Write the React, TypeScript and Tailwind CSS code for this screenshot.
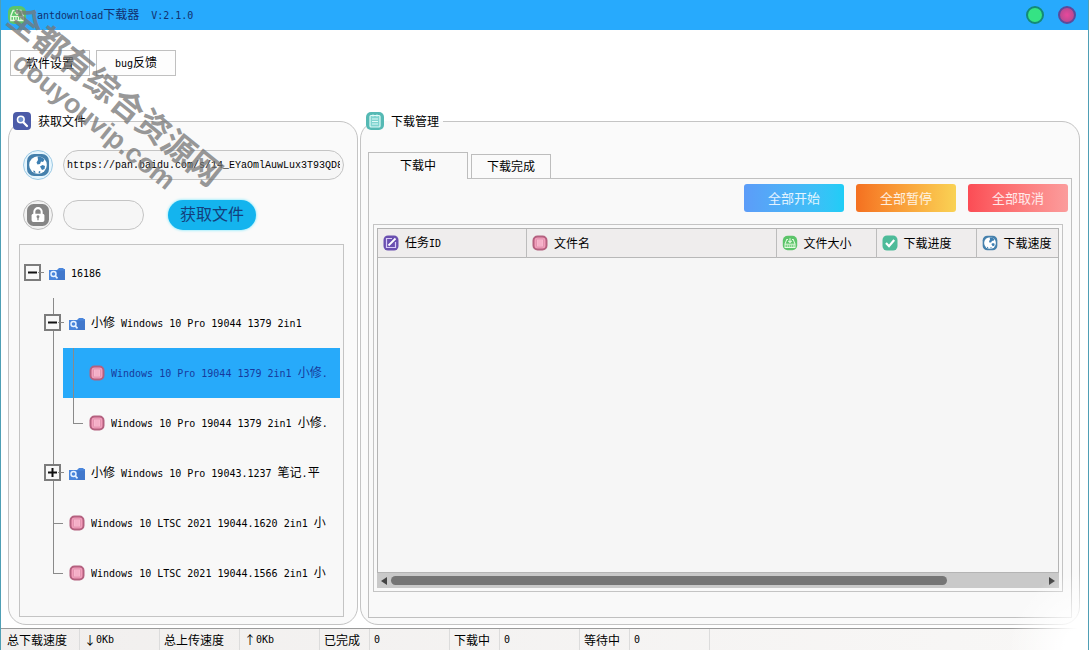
import { useState } from 'react'
import type { ReactNode } from 'react'

type IconProps = { className?: string }

const FONT_MONO = "font-['DejaVu_Sans_Mono','Noto_Sans_CJK_SC',monospace]"

// Latin runs are set smaller than the CJK ones so that two of them fill one CJK cell
function Mixed({ children }: { children: string }) {
  const parts = children.split(/([\x20-\x7e]+)/).filter(Boolean)
  return (
    <>
      {parts.map((p, i) =>
        /^[\x20-\x7e]/.test(p) ? (
          <span key={i} className={`whitespace-pre text-[10px] ${FONT_MONO}`}>
            {p}
          </span>
        ) : (
          <span key={i}>{p}</span>
        ),
      )}
    </>
  )
}

function BoxIcon({ className = 'size-4' }: IconProps) {
  return (
    <svg viewBox="0 0 16 16" className={className} aria-hidden="true">
      <rect x="1.5" y="1.5" width="13" height="13" rx="4" fill="#f29dbb" stroke="#b4607f" strokeWidth="2" />
      <rect x="4.5" y="4" width="7" height="8" rx="1" fill="#f8b6cd" stroke="#dc8eaa" strokeWidth=".8" />
      <path d="M7 4.5v7M9 4.5v7" stroke="#eda3bc" strokeWidth=".6" />
    </svg>
  )
}

function FolderIcon({ className = 'size-4' }: IconProps) {
  return (
    <svg viewBox="0 0 16 16" className={className} aria-hidden="true">
      <path d="M0 5h8l2-2h4l1 1h1v11H0z" fill="#4a86dc" />
      <path d="M8 5.5h8V15H8z" fill="#4178cc" />
      <circle cx="4.5" cy="9" r="2.5" fill="#4a86dc" stroke="#e8f3ff" strokeWidth="1.4" />
      <path d="M6.3 11l2.2 2.4" stroke="#e8f3ff" strokeWidth="1.6" />
    </svg>
  )
}

function DriveIcon({ className = 'size-4' }: IconProps) {
  return (
    <svg viewBox="0 0 20 20" className={className} aria-hidden="true">
      <rect x="1" y="1" width="18" height="18" rx="6" fill="#5cc46a" />
      <path d="M7.5 5.5H6L3.8 11v4.5h12.4V11L14 5.5h-1.5" fill="none" stroke="#e4fbe0" strokeWidth="1.3" />
      <path d="M10 4v5M7.8 7.2L10 9.4l2.2-2.2" fill="none" stroke="#e4fbe0" strokeWidth="1.3" />
      <path d="M3.8 11.5h12.4" stroke="#e4fbe0" strokeWidth="1.2" />
      <path d="M6.5 12v3M9 12v3M11.5 12v3M14 12v3" stroke="#e4fbe0" strokeWidth="1.1" />
    </svg>
  )
}

function SearchIcon({ className = 'size-4' }: IconProps) {
  return (
    <svg viewBox="0 0 18 18" className={className} aria-hidden="true">
      <rect width="18" height="18" rx="4" fill="#4b5ba8" />
      <circle cx="7.8" cy="7.5" r="3.3" fill="#6f8fd0" stroke="#fff" strokeWidth="1.6" />
      <path d="M10.3 10.2l3.7 3.8" stroke="#fff" strokeWidth="2.2" strokeLinecap="round" />
    </svg>
  )
}

function ListIcon({ className = 'size-4' }: IconProps) {
  return (
    <svg viewBox="0 0 18 18" className={className} aria-hidden="true">
      <rect width="18" height="18" rx="5" fill="#55b9b4" />
      <rect x="4" y="3.5" width="10" height="11.5" rx="1" fill="#7fd3cf" stroke="#dffaf7" strokeWidth="1.2" />
      <path d="M6 7h6M6 9.5h6M6 12h6M7 2.5v2M11 2.5v2" stroke="#dffaf7" strokeWidth="1.1" />
    </svg>
  )
}

function GlobeIcon({ className = 'size-4' }: IconProps) {
  return (
    <svg viewBox="0 0 24 24" className={className} aria-hidden="true">
      <rect x="1" y="1" width="22" height="22" rx="7" fill="#4580ac" />
      <circle cx="12" cy="12" r="8.8" fill="#fff" />
      <path d="M11.5 3.2c3 0 5.500 1.300 7 3.300l-1.500 2.500-2-.5-1 2.500-2.500.5-1-2 1.500-2.500z" fill="#3d7fb2" />
      <path d="M14 13.5l2.5-1.500 2.500 1-.5 3-2.500 1zM13 18l1.500.5-.5 1.500-1.500-.3zM7 17.500l2 .5.5 2-1.500-.5z" fill="#3d7fb2" />
    </svg>
  )
}

function LockIcon({ className = 'size-4' }: IconProps) {
  return (
    <svg viewBox="0 0 24 24" className={className} aria-hidden="true">
      <rect width="24" height="24" rx="7" fill="#858585" />
      <path d="M8 11V8.5a4 4 0 018 0V11" fill="none" stroke="#fff" strokeWidth="2.2" />
      <rect x="5" y="10.5" width="14" height="9" rx="2" fill="#fff" />
      <circle cx="12" cy="14" r="1.6" fill="#858585" />
      <path d="M12 14.5v3.2" stroke="#858585" strokeWidth="1.4" />
    </svg>
  )
}

function EditIcon({ className = 'size-4' }: IconProps) {
  return (
    <svg viewBox="0 0 16 16" className={className} aria-hidden="true">
      <rect x=".5" y=".5" width="15" height="15" rx="4.5" fill="#6a4fb0" />
      <path d="M9 3.5H3.5v9h9V7" fill="none" stroke="#d9ccf8" strokeWidth="1.2" />
      <path d="M5.5 10.5l7-7" stroke="#fff" strokeWidth="1.8" />
    </svg>
  )
}

function CheckIcon({ className = 'size-4' }: IconProps) {
  return (
    <svg viewBox="0 0 16 16" className={className} aria-hidden="true">
      <rect x=".5" y=".5" width="15" height="15" rx="4.5" fill="#4dbb99" />
      <path d="M4 8l3 3.2L12.2 5" fill="none" stroke="#fff" strokeWidth="2.2" />
    </svg>
  )
}

type GroupBoxProps = { icon: ReactNode; title: string; className: string; legendClass: string; children: ReactNode }

function GroupBox({ icon, title, className, legendClass, children }: GroupBoxProps) {
  return (
    <fieldset className={`flex min-w-0 flex-col rounded-[18px] border border-[#c4c4c4] bg-[#fafafa] ${className}`}>
      <legend className={`flex h-[18px] items-center gap-[7px] pr-1 ${legendClass}`}>
        {icon}
        {title}
      </legend>
      {children}
    </fieldset>
  )
}

type TreeItem = { depth: number; label: string; kind: 'folder' | 'file'; state?: 'open' | 'closed' }

const TREE: TreeItem[] = [
  { depth: 0, label: '16186', kind: 'folder', state: 'open' },
  { depth: 1, label: '小修 Windows 10 Pro 19044 1379 2in1', kind: 'folder', state: 'open' },
  { depth: 2, label: 'Windows 10 Pro 19044 1379 2in1 小修.', kind: 'file' },
  { depth: 2, label: 'Windows 10 Pro 19044 1379 2in1 小修.', kind: 'file' },
  { depth: 1, label: '小修 Windows 10 Pro 19043.1237 笔记.平', kind: 'folder', state: 'closed' },
  { depth: 1, label: 'Windows 10 LTSC 2021 19044.1620 2in1 小', kind: 'file' },
  { depth: 1, label: 'Windows 10 LTSC 2021 19044.1566 2in1 小', kind: 'file' },
]

// One 20px guide cell: a vertical line down the middle and an optional branch to the right
function Guide({ line, branch }: { line: 'full' | 'top'; branch: boolean }) {
  return (
    <svg viewBox="0 0 20 50" className="h-[50px] w-5 shrink-0" aria-hidden="true">
      <path d={line === 'full' ? 'M10.5 0v50' : 'M10.5 0v25.5'} stroke="#8a8a8a" />
      {branch && <path d="M10 25.5h10" stroke="#8a8a8a" />}
    </svg>
  )
}

function Toggle({ open, line }: { open: boolean; line: boolean }) {
  return (
    <button type="button" aria-label={open ? '折叠' : '展开'} className="h-[50px] w-5 shrink-0">
      <svg viewBox="0 0 20 50" className="h-[50px] w-5 overflow-visible" aria-hidden="true">
        {line && <path d="M10.5 0v50" stroke="#8a8a8a" />}
        <rect x="2" y="17" width="15" height="15" fill="#f8f8f8" stroke="#7c7c7c" strokeWidth="2" />
        <path d="M15 24.5h6" stroke="#8a8a8a" />
        <path d={open ? 'M5 24.5h9' : 'M5 24.5h9M9.5 20v9'} stroke="#111" strokeWidth="2" />
      </svg>
    </button>
  )
}

type TreeRowProps = { item: TreeItem; index: number; selected: boolean; onSelect: () => void }

function TreeRow({ item, index, selected, onSelect }: TreeRowProps) {
  const lastChild = TREE[index + 1]?.depth !== item.depth
  return (
    <li className="flex h-[50px] items-center">
      {item.depth > 0 && <span className="w-5 shrink-0" />}
      {item.depth > 1 && <Guide line="full" branch={false} />}
      <div className={`flex h-[50px] min-w-0 flex-1 items-center ${selected ? 'bg-[#27aafa] text-[#173a9c]' : ''}`}>
        {item.state ? (
          <Toggle open={item.state === 'open'} line={item.depth > 0} />
        ) : (
          <Guide line={lastChild ? 'top' : 'full'} branch={!selected} />
        )}
        <button type="button" onClick={onSelect} className="flex min-w-0 flex-1 items-center gap-1.5 pl-1.5 text-left">
          {item.kind === 'folder' ? <FolderIcon className="size-4 shrink-0" /> : <BoxIcon className="size-4 shrink-0" />}
          <span className="overflow-hidden whitespace-nowrap">
            <Mixed>{item.label}</Mixed>
          </span>
        </button>
      </div>
    </li>
  )
}

const COLUMNS = [
  { label: '任务ID', icon: <EditIcon />, width: 'w-[22%]' },
  { label: '文件名', icon: <BoxIcon />, width: 'w-[37%]' },
  { label: '文件大小', icon: <DriveIcon />, width: 'w-[100px]' },
  { label: '下载进度', icon: <CheckIcon />, width: 'w-[100px]' },
  { label: '下载速度', icon: <GlobeIcon />, width: 'w-[82px]' },
]

const ACTIONS = [
  { label: '全部开始', color: 'from-[#5c9cf8] to-[#1fcdf6]' },
  { label: '全部暂停', color: 'from-[#f47020] to-[#f9d254]' },
  { label: '全部取消', color: 'from-[#fb4c55] to-[#fb9c9c]' },
]

const STATUS = [
  { text: '总下载速度', width: 'w-[79px] pl-1.5' },
  { text: '↓0Kb', width: 'w-20 pl-1' },
  { text: '总上传速度', width: 'w-20 pl-1' },
  { text: '↑0Kb', width: 'w-20 pl-1' },
  { text: '已完成', width: 'w-[50px] pl-1' },
  { text: '0', width: 'w-20 pl-1' },
  { text: '下载中', width: 'w-[50px] pl-1' },
  { text: '0', width: 'w-20 pl-1' },
  { text: '等待中', width: 'w-[50px] pl-1' },
  { text: '0', width: 'w-20 pl-1' },
]

function TitleBar() {
  return (
    <header className="flex h-[30px] shrink-0 items-center bg-[#27aafd] px-1.5 text-[#12306e]">
      <DriveIcon className="size-5" />
      <h1 className="ml-2.5">
        <Mixed>antdownload下载器</Mixed>
      </h1>
      <span className="ml-3">
        <Mixed>V:2.1.0</Mixed>
      </span>
      <div className="ml-auto flex gap-3.5 pr-1.5">
        <button type="button" aria-label="最小化" className="size-[18px] rounded-full border-2 border-[#148a78] bg-[#35e384]" />
        <button
          type="button"
          aria-label="关闭"
          className="size-[18px] rounded-full border-2 border-[#5b4a9c] bg-radial from-[#e8489c] to-[#a8488c]"
        />
      </div>
    </header>
  )
}

function FetchPanel() {
  const [url, setUrl] = useState('https://pan.baidu.com/s/14_EYaOmlAuwLux3T93QD8')
  const [code, setCode] = useState('')
  const [selected, setSelected] = useState(2)

  return (
    <GroupBox
      icon={<SearchIcon className="size-[18px]" />}
      title="获取文件"
      legendClass="-ml-1.5"
      className="w-[350px] shrink-0 pr-[13px] pb-[7px] pl-2.5"
    >
      <div className="mt-5 flex items-center gap-2.5 pl-1">
        <label
          htmlFor="url"
          aria-label="链接"
          className="grid size-[30px] shrink-0 place-items-center rounded-full border border-[#9cc9e4] bg-[#e6f5fd]"
        >
          <GlobeIcon className="size-6" />
        </label>
        <input
          id="url"
          value={url}
          onChange={(e) => setUrl(e.target.value)}
          className="h-[30px] min-w-0 flex-1 rounded-full border border-[#c4c4c4] bg-[#f6f6f6] px-[3px] font-['Liberation_Mono',monospace] text-[10px]"
        />
      </div>
      <div className="mt-5 flex items-center gap-2.5 pl-1">
        <label
          htmlFor="code"
          aria-label="提取码"
          className="grid size-[30px] shrink-0 place-items-center rounded-full border border-[#bcbcbc] bg-[#f2f2f2]"
        >
          <LockIcon className="size-[22px]" />
        </label>
        <input
          id="code"
          value={code}
          onChange={(e) => setCode(e.target.value)}
          className="h-[30px] w-[81px] rounded-full border border-[#c4c4c4] bg-[#f6f6f6] px-2 font-['Liberation_Mono',monospace] text-[10px]"
        />
        <button
          type="button"
          className="ml-3.5 h-[30px] w-[88px] rounded-full bg-[#14b4ee] pb-1 text-base text-[#14407c] shadow-[0_0_3px_#5fe4ff]"
        >
          获取文件
        </button>
      </div>
      <ul className="mt-3.5 flex-1 border border-[#c4c4c4] bg-[#f8f8f8] px-[3px] pt-[3px]">
        {TREE.map((item, i) => (
          <TreeRow key={i} item={item} index={i} selected={selected === i} onSelect={() => setSelected(i)} />
        ))}
      </ul>
    </GroupBox>
  )
}

function DownloadPanel() {
  const [tab, setTab] = useState(0)

  return (
    <GroupBox
      icon={<ListIcon className="size-[18px]" />}
      title="下载管理"
      legendClass="-ml-0.5"
      className="flex-1 px-[7px] pb-1.5"
    >
      <div role="tablist" className="mt-[22px] flex items-end gap-[3px]">
        {['下载中', '下载完成'].map((label, i) => (
          <button
            key={label}
            type="button"
            role="tab"
            aria-selected={tab === i}
            onClick={() => setTab(i)}
            className={`border border-b-0 border-[#bdbdbd] pb-0.5 ${
              tab === i ? 'z-10 -mb-px h-[27px] w-[100px] bg-[#f9f9f9]' : 'h-6 w-20 bg-[#fafafa]'
            }`}
          >
            {label}
          </button>
        ))}
      </div>
      <div role="tabpanel" className="flex flex-1 flex-col border border-[#c0c0c0] bg-[#f9f9f9] pb-[25px]">
        <div className="flex justify-end gap-3 px-[3px] pt-[5px]">
          {ACTIONS.map((a) => (
            <button
              key={a.label}
              type="button"
              className={`h-7 w-[100px] rounded-[3px] bg-linear-to-r text-[13px] text-white/85 ${a.color}`}
            >
              {a.label}
            </button>
          ))}
        </div>
        <div className="mt-3 mr-2 ml-1 flex flex-1 flex-col border border-[#c4c4c4] p-[3px]">
          <div className="flex-1 border border-[#b4b4b4] bg-[#f6f6f6]">
            <table className="w-full table-fixed border-collapse">
              <thead>
                <tr className="h-7 border-b border-[#b8b8b8] bg-[#efeded]">
                  {COLUMNS.map((c) => (
                    <th key={c.label} className={`border-r border-[#bcbcbc] p-0 font-normal last:border-r-0 ${c.width}`}>
                      <span className="flex items-center gap-1.5 pl-[5px] whitespace-nowrap">
                        {c.icon}
                        <span>
                          <Mixed>{c.label}</Mixed>
                        </span>
                      </span>
                    </th>
                  ))}
                </tr>
              </thead>
              <tbody />
            </table>
          </div>
          <div className="flex h-[15px] items-center gap-1 bg-[#c9c9c9] px-1">
            <svg viewBox="0 0 6 8" className="h-2 w-1.5" aria-hidden="true">
              <path d="M6 0v8L0 4z" fill="#444" />
            </svg>
            <div className="h-full flex-1 py-[3px]">
              <div className="h-[9px] w-[85%] rounded-full bg-[#757575]" />
            </div>
            <svg viewBox="0 0 6 8" className="h-2 w-1.5" aria-hidden="true">
              <path d="M0 0v8l6-4z" fill="#444" />
            </svg>
          </div>
        </div>
      </div>
    </GroupBox>
  )
}

export default function App() {
  return (
    <div className="relative flex min-h-screen flex-col overflow-hidden border-x border-[#4f9fb5] bg-white font-['Noto_Sans_CJK_SC',sans-serif] text-xs leading-4 text-black">
      <TitleBar />
      <nav className="flex gap-1.5 px-[9px] pt-5">
        {['软件设置', 'bug反馈'].map((label) => (
          <button key={label} type="button" className="h-[26px] w-20 border border-[#c0c0c0] bg-[#fdfdfd]">
            <Mixed>{label}</Mixed>
          </button>
        ))}
      </nav>
      <main className="flex flex-1 gap-0.5 pt-9 pr-2 pb-[3px] pl-[7px]">
        <FetchPanel />
        <DownloadPanel />
      </main>
      <footer className="flex h-[22px] shrink-0 border-t border-[#9a9a9a] bg-linear-to-r from-[#f1efee] to-[#f8f7f6]">
        {STATUS.map((s, i) => (
          <span key={i} className={`flex items-center border-r border-[#dcdcdc] whitespace-nowrap ${s.width}`}>
            <Mixed>{s.text}</Mixed>
          </span>
        ))}
      </footer>
      {/* soft fade over the lower right corner */}
      <div className="pointer-events-none absolute right-0 bottom-0 h-20 w-20 bg-[radial-gradient(farthest-side_at_bottom_right,#fff_30%,#ffffff00)]" />
      <div className="pointer-events-none absolute top-[73px] left-[-28px] w-[264px] rotate-39 text-center leading-[35px] font-bold text-[#767676]/75">
        <p className="text-[33px] whitespace-nowrap">全都有综合资源网</p>
        <p className="font-['Liberation_Sans',sans-serif] text-[27px]">douyouvip.com</p>
      </div>
    </div>
  )
}
